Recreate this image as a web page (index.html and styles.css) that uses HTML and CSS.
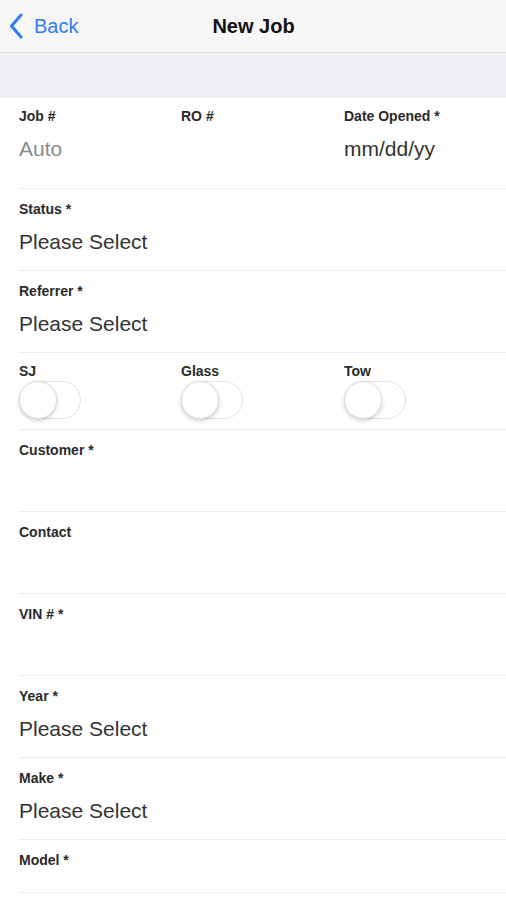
FILE: index.html
```html
<!DOCTYPE html>
<html>
<head>
  <title>New Job</title>
  <link rel="stylesheet" href="styles.css">
</head>
<body>

  <div class="nav-bar">
    <a class="back-link" href="#">
      <svg class="back-icon" width="14" height="26" viewBox="0 0 14 26">
        <polyline points="12,2 2.5,13 12,24" fill="none" stroke="#2f7cf6" stroke-width="3" stroke-linecap="round" stroke-linejoin="round"/>
      </svg>
      <span>Back</span>
    </a>
    <div class="nav-title">New Job</div>
  </div>

  <div class="band"></div>

  <form class="job-form">
    <div class="form-row first">
      <div class="field">
        <label>Job #</label>
        <div class="value muted">Auto</div>
      </div>
      <div class="field">
        <label>RO #</label>
        <div class="value"></div>
      </div>
      <div class="field">
        <label>Date Opened *</label>
        <div class="value">mm/dd/yy</div>
      </div>
    </div>

    <div class="form-row">
      <label>Status *</label>
      <div class="value">Please Select</div>
    </div>

    <div class="form-row">
      <label>Referrer *</label>
      <div class="value">Please Select</div>
    </div>

    <div class="form-row toggles">
      <div class="field">
        <label>SJ</label>
        <span class="switch"><span class="knob"></span></span>
      </div>
      <div class="field">
        <label>Glass</label>
        <span class="switch"><span class="knob"></span></span>
      </div>
      <div class="field">
        <label>Tow</label>
        <span class="switch"><span class="knob"></span></span>
      </div>
    </div>

    <div class="form-row">
      <label>Customer *</label>
      <div class="value"></div>
    </div>

    <div class="form-row">
      <label>Contact</label>
      <div class="value"></div>
    </div>

    <div class="form-row">
      <label>VIN # *</label>
      <div class="value"></div>
    </div>

    <div class="form-row">
      <label>Year *</label>
      <div class="value">Please Select</div>
    </div>

    <div class="form-row">
      <label>Make *</label>
      <div class="value">Please Select</div>
    </div>

    <div class="form-row short">
      <label>Model *</label>
    </div>
  </form>

</body>
</html>
```

FILE: styles.css
```css
body {
  font-family: "Liberation Sans", Arial, sans-serif;
  background-color: #fff;
  margin: 0;
  padding: 0;
  color: #222;
}

.nav-bar {
  position: relative;
  height: 53px;
  background-color: #f7f7f7;
  border-bottom: 1px solid #e2e2e2;
  box-sizing: border-box;
  display: flex;
  align-items: center;
  justify-content: center;
}

.back-link {
  position: absolute;
  left: 9px;
  top: 13px;
  display: flex;
  align-items: center;
  gap: 11px;
  color: #2f7cf6;
  text-decoration: none;
  font-size: 20px;
}

.back-icon {
  display: block;
}

.nav-title {
  font-size: 20px;
  font-weight: bold;
  color: #111;
  padding-left: 1px;
}

.band {
  height: 45px;
  background-color: #efeff4;
}

.job-form {
  padding-left: 19px;
}

.form-row {
  border-bottom: 1px solid #ececec;
  padding: 12px 0 16px;
}

.form-row.first,
.form-row.toggles {
  display: grid;
  grid-template-columns: 162px 163px 1fr;
  padding-top: 10px;
}

.form-row.first {
  padding-bottom: 27px;
}

.form-row.toggles {
  padding-bottom: 10px;
}

.form-row.short {
  padding-bottom: 24px;
}

.form-row label {
  display: block;
  font-size: 14px;
  line-height: 16px;
  font-weight: bold;
  color: #2a2a2a;
}

.value {
  margin-top: 13px;
  height: 24px;
  font-size: 21px;
  line-height: 24px;
  color: #333;
}

.value.muted {
  color: #8a8a8a;
}

.switch {
  display: block;
  position: relative;
  margin-top: 2px;
  width: 62px;
  height: 38px;
  border: 1px solid #e3e3e3;
  border-radius: 19px;
  box-sizing: border-box;
  background-color: #fff;
}

.knob {
  position: absolute;
  left: -1px;
  top: -1px;
  width: 38px;
  height: 38px;
  border-radius: 50%;
  background-color: #fff;
  border: 1px solid #dedede;
  box-sizing: border-box;
  box-shadow: 0 2px 4px rgba(0, 0, 0, 0.18);
}
```
